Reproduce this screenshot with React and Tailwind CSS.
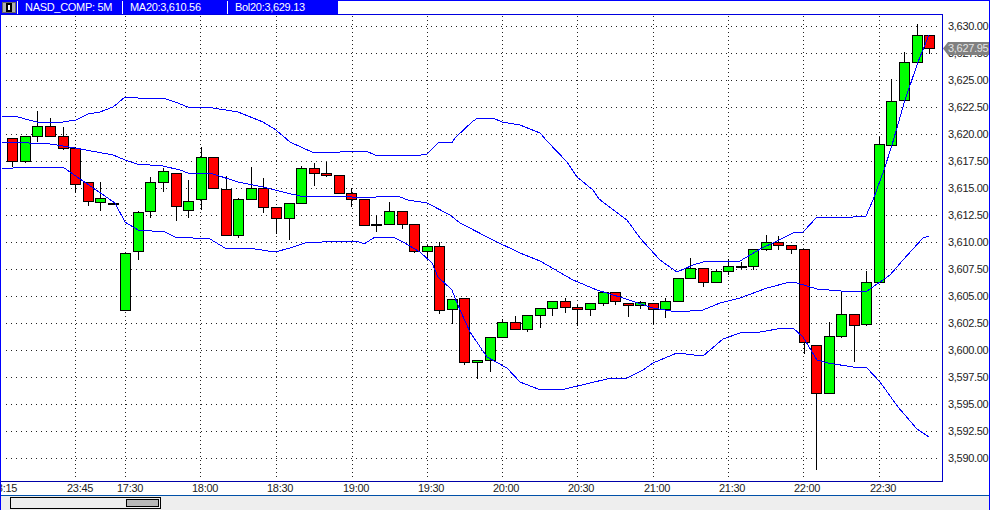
const G = 1, R = 0;
// [centre x, wick top, body top, body bottom, wick bottom, colour]
const candles = [
  [12,138,138,161,166,R],[25,136,136,161,162,G],[37,111,126,136,141,G],[50,118,126,136,136,R],
  [63,127,136,148,149,R],[75,147,148,184,192,R],[88,182,182,201,205,R],[100,182,198,202,210,G],
  [113,203,203,204,204,R],[125,253,253,310,310,G],[138,211,212,251,259,G],[150,177,182,211,217,G],
  [163,168,171,182,191,G],[176,173,173,206,220,R],[188,180,201,210,217,G],[201,147,157,199,209,G],
  [213,157,157,188,188,R],[226,176,189,235,235,R],[238,198,199,235,237,G],[251,167,188,199,199,G],
  [263,178,188,207,212,R],[276,207,207,218,233,R],[289,203,203,218,239,G],[301,166,168,203,203,G],
  [314,163,168,173,185,R],[326,162,173,175,176,R],[339,175,175,193,193,R],[351,188,193,199,206,R],
  [364,199,199,225,225,R],[376,215,224,225,231,R],[389,202,211,224,224,G],[402,211,211,224,228,R],
  [414,224,224,251,252,R],[427,245,246,251,257,G],[439,242,246,310,313,R],[452,299,299,309,323,G],
  [464,298,298,362,364,R],[477,360,360,362,378,G],[490,337,337,360,371,G],[502,319,322,337,337,G],
  [515,316,322,329,329,R],[527,315,315,329,331,G],[540,308,308,315,327,G],[552,301,301,308,315,G],
  [565,298,301,307,312,R],[577,305,307,309,325,R],[590,303,303,309,315,G],[603,292,292,303,305,G],
  [615,292,292,301,304,R],[628,303,303,305,316,R],[640,301,302,305,308,G],[653,303,303,309,323,R],
  [665,298,301,309,317,G],[678,278,278,301,301,G],[690,258,268,278,278,G],[703,268,268,282,286,R],
  [716,269,271,282,282,G],[728,259,266,271,274,G],[741,262,266,266,268,R],[753,249,249,266,269,G],
  [766,235,242,249,250,G],[778,236,242,245,249,R],[791,245,245,249,253,R],[804,249,249,342,353,R],
  [816,345,345,393,469,R],[829,322,336,393,393,G],[841,291,314,336,337,G],[854,314,314,325,361,R],
  [866,271,282,324,325,G],[879,137,144,282,282,G],[891,79,101,145,145,G],[904,52,62,100,100,G],
  [917,24,35,62,62,G],[929,35,35,48,53,R],
];
const upper = "2,116 15,116 25,119 37,122 63,122 76,120 88,114 100,112 113,107 118,103 125,97 138,98 163,98 175,102 188,107 213,108 238,112 263,122 276,130 290,142 314,153 326,152 340,152 352,151 366,151 375,155 398,155 415,156 427,154 439,142 452,143 455,138 473,121 478,118 493,118 502,122 520,125 540,133 547,141 567,162 577,177 593,190 599,199 627,220 640,238 660,260 677,272 693,265 703,262 740,261 762,248 775,242 793,233 803,232 817,217 853,217 866,216 873,200 884,170 892,145 905,100 918,62 929,35";
const middle = "2,142 8,142 50,144 63,146 75,148 113,155 125,160 137,164 150,165 163,166 180,170 188,173 210,173 238,182 263,187 287,193 300,196 327,197 340,196 352,197 376,197 390,196 400,197 408,200 427,203 450,215 460,223 493,240 520,253 540,261 573,280 597,290 623,298 653,308 677,312 703,310 720,303 740,298 767,288 790,282 797,283 817,289 853,292 867,291 880,282 890,275 903,260 923,238 929,236";
const lower = "2,169 25,167 63,167 67,170 115,203 125,222 138,230 165,232 175,237 210,239 225,248 255,249 275,252 290,248 305,243 340,241 357,241 364,244 375,237 393,237 403,242 420,252 432,263 438,277 452,290 457,303 470,332 487,357 507,368 520,382 538,389 565,389 590,383 607,379 627,378 643,370 653,363 677,353 703,356 723,339 740,333 760,332 783,328 793,328 803,337 817,360 828,363 853,367 866,367 880,382 898,407 917,429 929,437";
const rows = [26,53,80,107,134,161,188,215,242,269,296,323,350,377,404,431,458];
const cols = [75,125,200,276,352,427,502,577,653,728,803,879];
const prices = ["3,630.00","3,627.50","3,625.00","3,622.50","3,620.00","3,617.50","3,615.00","3,612.50","3,610.00","3,607.50","3,605.00","3,602.50","3,600.00","3,597.50","3,595.00","3,592.50","3,590.00"];

function Chart() {
  return (
    <svg viewBox="1 15 941 466" width="941" height="466" className="block" shapeRendering="crispEdges">
      {rows.map((y) => (
        <line key={y} x1="6" x2="939" y1={y + 0.5} y2={y + 0.5} stroke="#222" strokeDasharray="1 4" />
      ))}
      {cols.map((x) => (
        <line key={x} x1={x + 0.5} x2={x + 0.5} y1="16" y2="478" stroke="#222" strokeDasharray="1 3" />
      ))}
      {candles.map(([c, wt, t, b, wb, col]) => (
        <g key={c}>
          <rect x={c} y={wt} width="1" height={wb - wt + 1} fill="#000" />
          <rect x={c - 4.5} y={t + 0.5} width="10" height={Math.max(b - t, 1)} fill={col ? "#00ff00" : "#ff0000"} stroke="#000" />
        </g>
      ))}
      <polyline points={upper} fill="none" stroke="#0000ff" />
      <polyline points={middle} fill="none" stroke="#0000ff" />
      <polyline points={lower} fill="none" stroke="#0000ff" />
    </svg>
  );
}

function Section({ children }) {
  return (
    <div className="flex h-full w-[105px] items-center border-l border-white pl-[7px] whitespace-nowrap text-white">
      {children}
    </div>
  );
}

const times = [["23:15","w-[76px]"],["23:45","w-[50px]"],["17:30","w-[75px]"],["18:00","w-[75px]"],["18:30","w-[76px]"],["19:00","w-[75px]"],["19:30","w-[75px]"],["20:00","w-[75px]"],["20:30","w-[76px]"],["21:00","w-[75px]"],["21:30","w-[75px]"],["22:00","w-[76px]"],["22:30","w-[76px]"]];

export default function App() {
  return (
    <div className="flex h-[510px] w-[990px] flex-col overflow-hidden border-x border-t border-[#0000ff] bg-white font-['Liberation_Sans',Arial,sans-serif] text-[11px] tracking-[-0.3px] text-[#222]">
      <div className="flex h-[481px] shrink-0">
        <div className="flex w-[942px] shrink-0 flex-col">
          <div className="flex h-[13px] w-[337px] items-center bg-[#0000ff] pl-[1px]">
            <div className="flex h-[11px] w-[14px] shrink-0 items-center justify-center border border-[#666] bg-[#b0b0b0] mr-[1px]">
              <svg width="8" height="9" viewBox="0 0 8 9" shapeRendering="crispEdges">
                <rect x="1" y="0" width="6" height="9" fill="#000" />
                <rect x="3" y="2" width="2" height="5" fill="#fff" />
              </svg>
            </div>
            <Section>NASD_COMP: 5M</Section>
            <Section>MA20:3,610.56</Section>
            <Section>Bol20:3,629.13</Section>
          </div>
          <div className="h-[468px] border-y border-r border-t-[#0000e0] border-r-[#0000d0] border-b-[#0000a8]">
            <Chart />
          </div>
        </div>
        <div className="relative w-[46px] shrink-0 overflow-hidden pl-[5px] pt-[12px]">
          {prices.map((p) => (
            <div key={p} className="h-[27px] whitespace-nowrap leading-[27px]">{p}</div>
          ))}
          <div className="absolute left-0 top-[41px] h-[13px] w-[46px] whitespace-nowrap bg-[#808080] pl-[5px] leading-[13px] text-[#e4e4e4] [clip-path:polygon(0_50%,5px_0,100%_0,100%_100%,5px_100%)]">
            3,627.95
          </div>
        </div>
      </div>
      <div className="flex h-[13px] shrink-0 -ml-[10px] items-center leading-[13px]">
        {times.map(([t, w]) => (
          <div key={t} className={w + " shrink-0"}>{t}</div>
        ))}
      </div>
      <div className="flex-1 border-t border-[#0050a8] bg-[#eeeeee] pl-[9px] pt-[1px]">
        <div className="flex h-[12px] w-[151px] items-center justify-end border border-black pr-[1px]">
          <div className="h-[8px] w-[33px] border border-black bg-[#b8b8b8]" />
        </div>
      </div>
    </div>
  );
}
